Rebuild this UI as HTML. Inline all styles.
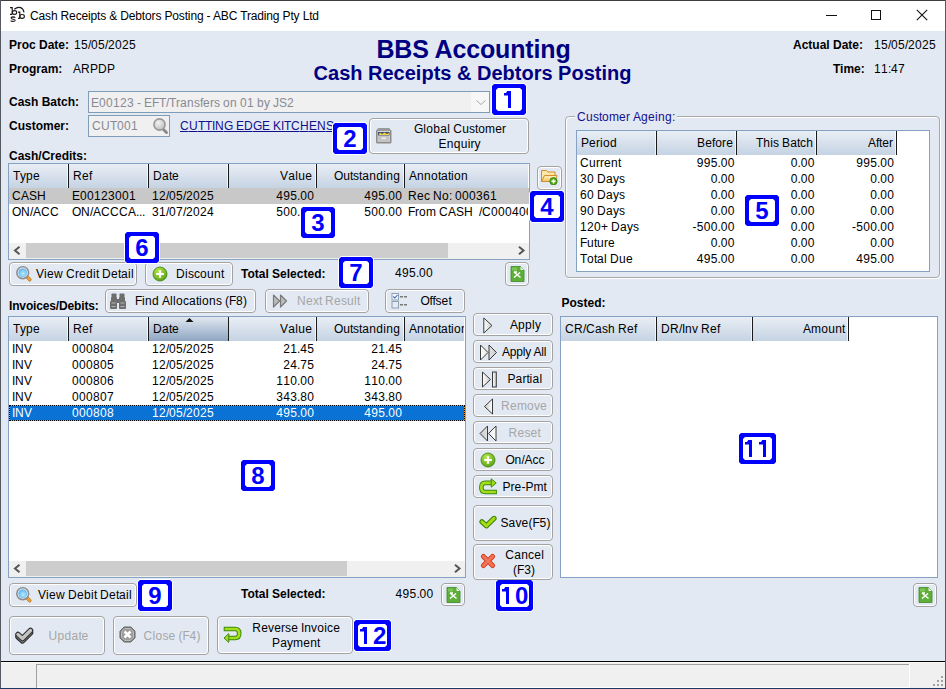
<!DOCTYPE html><html><head><meta charset="utf-8"><style>
html,body{margin:0;padding:0;}
body{width:946px;height:689px;position:relative;overflow:hidden;background:#e3e9f3;font-family:"Liberation Sans", sans-serif;}
.a{position:absolute;}
.t{position:absolute;white-space:nowrap;font-family:"Liberation Sans", sans-serif;}
.c{display:inline-block;}
</style></head><body>
<div class="a" style="left:0px;top:0px;width:946px;height:31px;background:#fff;"></div>
<div class="a" style="left:0px;top:661px;width:946px;height:28px;background:#f0f0f0;"></div>
<div class="a" style="left:0px;top:661px;width:946px;height:1px;background:#000;"></div>
<div class="a" style="left:36px;top:664px;width:874px;height:1px;background:#a0a0a0;"></div>
<div class="a" style="left:36px;top:664px;width:1px;height:24px;background:#a0a0a0;"></div>
<div class="a" style="left:0px;top:662px;width:946px;height:1px;background:#fbfbfb;"></div>
<div class="a" style="left:909px;top:664px;width:1px;height:24px;background:#fff;"></div>
<div class="a" style="left:37px;top:687px;width:873px;height:1px;background:#fff;"></div>
<div class="a" style="left:941px;top:676px;width:2px;height:2px;background:#a0a0a0;"></div>
<div class="a" style="left:937px;top:680px;width:2px;height:2px;background:#a0a0a0;"></div>
<div class="a" style="left:941px;top:680px;width:2px;height:2px;background:#a0a0a0;"></div>
<div class="a" style="left:933px;top:684px;width:2px;height:2px;background:#a0a0a0;"></div>
<div class="a" style="left:937px;top:684px;width:2px;height:2px;background:#a0a0a0;"></div>
<div class="a" style="left:941px;top:684px;width:2px;height:2px;background:#a0a0a0;"></div>
<div class="a" style="left:0px;top:0px;width:946px;height:1px;background:#3c3c3c;"></div>
<div class="a" style="left:0px;top:0px;width:1px;height:689px;background:#555a60;"></div>
<div class="a" style="left:945px;top:0px;width:1px;height:689px;background:#555a60;"></div>
<div class="a" style="left:0px;top:688px;width:946px;height:1px;background:#1d3a5c;"></div>
<svg class="a" style="left:8px;top:5px" width="20" height="20" viewBox="0 0 20 20"><g fill="none" stroke="#1a1a1a" stroke-width="1.15"><path d="M2 2.6 H4.2 V9.3 M2 9.3 H4.2"/><ellipse cx="6.5" cy="7.5" rx="2.2" ry="1.9"/><path d="M7.2 12.6 Q6.8 11.9 5 11.9 Q3 12 3.2 13.1 Q3.5 14 5.2 14.2 Q7.3 14.5 7.2 15.4 Q7 16.4 5 16.4 Q3.2 16.3 2.7 15.6"/><path d="M10 7.1 H11.8 V13.4 M10 13.4 H11.8"/><ellipse cx="14.1" cy="11.4" rx="2.3" ry="1.9"/><path d="M6.3 4.2 Q9.5 1.6 12.6 2.6 Q15.5 3.6 16 7.4"/></g></svg>
<div class="t" style="top:10.00px;font-size:12px;line-height:12px;color:#000;left:30px;letter-spacing:-0.15px;">Cash Receipts &amp; Debtors Posting - ABC Trading Pty Ltd</div>
<div class="a" style="left:826px;top:15px;width:11px;height:1px;background:#111;"></div>
<div class="a" style="left:871px;top:10px;width:10px;height:10px;box-sizing:border-box;border:1px solid #111;"></div>
<svg class="a" style="left:916px;top:9px" width="12" height="12" viewBox="0 0 12 12"><path d="M0.8 0.8 L11.2 11.2 M11.2 0.8 L0.8 11.2" stroke="#111" stroke-width="1.1"/></svg>
<div class="t" style="top:39.00px;font-size:12px;line-height:12px;color:#000;font-weight:bold;left:9px;">Proc Date:</div>
<div class="t" style="top:39.00px;font-size:12px;line-height:12px;color:#000;left:74px;"><span class="c" style="width:7px">1</span><span class="c" style="width:7px">5</span><span class="c" style="width:3px">/</span><span class="c" style="width:7px">0</span><span class="c" style="width:7px">5</span><span class="c" style="width:3px">/</span><span class="c" style="width:7px">2</span><span class="c" style="width:7px">0</span><span class="c" style="width:7px">2</span><span class="c" style="width:7px">5</span></div>
<div class="t" style="top:63.00px;font-size:12px;line-height:12px;color:#000;font-weight:bold;left:9px;">Program:</div>
<div class="t" style="top:63.00px;font-size:12px;line-height:12px;color:#000;left:73px;"><span class="c" style="width:8px">A</span><span class="c" style="width:9px">R</span><span class="c" style="width:8px">P</span><span class="c" style="width:9px">D</span><span class="c" style="width:8px">P</span></div>
<div class="t" style="top:36.50px;font-size:25px;line-height:25px;color:#000080;font-weight:bold;left:273.5px;width:400px;text-align:center;letter-spacing:-0.15px;">BBS Accounting</div>
<div class="t" style="top:63.00px;font-size:20px;line-height:20px;color:#000080;font-weight:bold;left:272.5px;width:400px;text-align:center;">Cash Receipts &amp; Debtors Posting</div>
<div class="t" style="top:39.00px;font-size:12px;line-height:12px;color:#000;font-weight:bold;left:793px;">Actual Date:</div>
<div class="t" style="top:39.00px;font-size:12px;line-height:12px;color:#000;left:874px;"><span class="c" style="width:7px">1</span><span class="c" style="width:7px">5</span><span class="c" style="width:3px">/</span><span class="c" style="width:7px">0</span><span class="c" style="width:7px">5</span><span class="c" style="width:3px">/</span><span class="c" style="width:7px">2</span><span class="c" style="width:7px">0</span><span class="c" style="width:7px">2</span><span class="c" style="width:7px">5</span></div>
<div class="t" style="top:63.00px;font-size:12px;line-height:12px;color:#000;font-weight:bold;left:833px;">Time:</div>
<div class="t" style="top:63.00px;font-size:12px;line-height:12px;color:#000;left:874px;"><span class="c" style="width:7px">1</span><span class="c" style="width:7px">1</span><span class="c" style="width:3px">:</span><span class="c" style="width:7px">4</span><span class="c" style="width:7px">7</span></div>
<div class="t" style="top:96.00px;font-size:12px;line-height:12px;color:#000;font-weight:bold;left:9px;">Cash Batch:</div>
<div class="a" style="left:88px;top:91px;width:402px;height:22px;box-sizing:border-box;border:1px solid #7f9db9;background:#f0f0f0;"></div>
<div class="a" style="left:471px;top:92px;width:18px;height:20px;background:#f7f7f7;"></div>
<svg class="a" style="left:475px;top:99px" width="12" height="8" viewBox="0 0 12 8"><path d="M1.5 1.5 L6 5.5 L10.5 1.5" fill="none" stroke="#a8a8a8" stroke-width="1"/></svg>
<div class="t" style="top:97.00px;font-size:12px;line-height:12px;color:#898994;left:91px;"><span class="c" style="width:8px">E</span><span class="c" style="width:7px">0</span><span class="c" style="width:7px">0</span><span class="c" style="width:7px">1</span><span class="c" style="width:7px">2</span><span class="c" style="width:7px">3</span><span class="c" style="width:3px">&nbsp;</span><span class="c" style="width:4px">-</span><span class="c" style="width:3px">&nbsp;</span><span class="c" style="width:8px">E</span><span class="c" style="width:7px">F</span><span class="c" style="width:7px">T</span><span class="c" style="width:3px">/</span><span class="c" style="width:7px">T</span><span class="c" style="width:4px">r</span><span class="c" style="width:7px">a</span><span class="c" style="width:7px">n</span><span class="c" style="width:6px">s</span><span class="c" style="width:3px">f</span><span class="c" style="width:7px">e</span><span class="c" style="width:4px">r</span><span class="c" style="width:6px">s</span><span class="c" style="width:3px">&nbsp;</span><span class="c" style="width:7px">o</span><span class="c" style="width:7px">n</span><span class="c" style="width:3px">&nbsp;</span><span class="c" style="width:7px">0</span><span class="c" style="width:7px">1</span><span class="c" style="width:3px">&nbsp;</span><span class="c" style="width:7px">b</span><span class="c" style="width:6px">y</span><span class="c" style="width:3px">&nbsp;</span><span class="c" style="width:6px">J</span><span class="c" style="width:8px">S</span><span class="c" style="width:7px">2</span></div>
<div class="t" style="top:120.00px;font-size:12px;line-height:12px;color:#000;font-weight:bold;left:9px;">Customer:</div>
<div class="a" style="left:88px;top:115px;width:82px;height:22px;box-sizing:border-box;border:1px solid #7f9db9;background:#f0f0f0;"></div>
<div class="t" style="top:120.00px;font-size:12px;line-height:12px;color:#898994;left:92px;"><span class="c" style="width:9px">C</span><span class="c" style="width:9px">U</span><span class="c" style="width:7px">T</span><span class="c" style="width:7px">0</span><span class="c" style="width:7px">0</span><span class="c" style="width:7px">1</span></div>
<svg class="a" style="left:151px;top:117px" width="18" height="18" viewBox="0 0 18 18"><defs><radialGradient id="mg" cx="0.4" cy="0.35" r="0.7"><stop offset="0" stop-color="#f2f2f2"/><stop offset="1" stop-color="#bdbdbd"/></radialGradient></defs><path d="M12.5 12.5 L15.5 15.5" stroke="#8a8a8a" stroke-width="3" stroke-linecap="round"/><circle cx="8.5" cy="7.5" r="5.6" fill="url(#mg)" stroke="#9a9a9a" stroke-width="1.6"/></svg>
<div class="t" style="top:120.00px;font-size:12px;line-height:12px;color:#10108c;left:180px;"><span class="c" style="width:9px;text-decoration:underline">C</span><span class="c" style="width:9px;text-decoration:underline">U</span><span class="c" style="width:7px;text-decoration:underline">T</span><span class="c" style="width:7px;text-decoration:underline">T</span><span class="c" style="width:3px;text-decoration:underline">I</span><span class="c" style="width:9px;text-decoration:underline">N</span><span class="c" style="width:9px;text-decoration:underline">G</span><span class="c" style="width:3px;text-decoration:underline">&nbsp;</span><span class="c" style="width:8px;text-decoration:underline">E</span><span class="c" style="width:9px;text-decoration:underline">D</span><span class="c" style="width:9px;text-decoration:underline">G</span><span class="c" style="width:8px;text-decoration:underline">E</span><span class="c" style="width:3px;text-decoration:underline">&nbsp;</span><span class="c" style="width:8px;text-decoration:underline">K</span><span class="c" style="width:3px;text-decoration:underline">I</span><span class="c" style="width:7px;text-decoration:underline">T</span><span class="c" style="width:9px;text-decoration:underline">C</span><span class="c" style="width:9px;text-decoration:underline">H</span><span class="c" style="width:8px;text-decoration:underline">E</span><span class="c" style="width:9px;text-decoration:underline">N</span><span class="c" style="width:8px;text-decoration:underline">S</span></div>
<div class="a" style="left:369px;top:118px;width:160px;height:36px;box-sizing:border-box;border:1px solid #a3a3a3;border-radius:4px;background:#e3e9f3;box-shadow:inset 0 0 0 1px #fff;"></div>
<svg class="a" style="left:375px;top:127px" width="18" height="18" viewBox="0 0 18 18"><rect x="1" y="2.5" width="15.5" height="14" rx="1.5" fill="#8c8c8c"/><rect x="2.5" y="1" width="12.5" height="3" rx="1" fill="#9a9a9a"/><rect x="2.5" y="4" width="12.5" height="11" fill="#d6d6d6"/><rect x="3" y="5" width="11.5" height="3.5" fill="#3a4f7a"/><path d="M3.5 8 L5 5.5 L7 7 L9.5 5.5 L12 7 L14 6 L14 8 Z" fill="#f2d23c"/><rect x="3" y="9" width="11.5" height="6" fill="#c4c4c4"/><rect x="6.5" y="10.5" width="4.5" height="1.5" fill="#eee"/></svg>
<div class="t" style="top:123.00px;font-size:12px;line-height:12px;color:#000;left:260px;width:400px;text-align:center;"><span class="c" style="width:9px">G</span><span class="c" style="width:3px">l</span><span class="c" style="width:7px">o</span><span class="c" style="width:7px">b</span><span class="c" style="width:7px">a</span><span class="c" style="width:3px">l</span><span class="c" style="width:3px">&nbsp;</span><span class="c" style="width:9px">C</span><span class="c" style="width:7px">u</span><span class="c" style="width:6px">s</span><span class="c" style="width:3px">t</span><span class="c" style="width:7px">o</span><span class="c" style="width:10px">m</span><span class="c" style="width:7px">e</span><span class="c" style="width:4px">r</span></div>
<div class="t" style="top:138.00px;font-size:12px;line-height:12px;color:#000;left:259.5px;width:400px;text-align:center;"><span class="c" style="width:8px">E</span><span class="c" style="width:7px">n</span><span class="c" style="width:7px">q</span><span class="c" style="width:7px">u</span><span class="c" style="width:3px">i</span><span class="c" style="width:4px">r</span><span class="c" style="width:6px">y</span></div>
<div class="t" style="top:150.00px;font-size:12px;line-height:12px;color:#000;font-weight:bold;left:9px;">Cash/Credits:</div>
<div class="a" style="left:8px;top:163px;width:522px;height:97px;box-sizing:border-box;border:1px solid #86a2c2;background:#fff;"></div>
<div class="a" style="left:9px;top:164px;width:519px;height:24px;background:linear-gradient(#e9eef5,#c5d3e3);"></div>
<div class="a" style="left:67px;top:164px;width:1px;height:24px;background:rgba(255,255,255,0.7);"></div>
<div class="a" style="left:68px;top:164px;width:1px;height:24px;background:#1a1a1a;"></div>
<div class="a" style="left:147px;top:164px;width:1px;height:24px;background:rgba(255,255,255,0.7);"></div>
<div class="a" style="left:148px;top:164px;width:1px;height:24px;background:#1a1a1a;"></div>
<div class="a" style="left:227px;top:164px;width:1px;height:24px;background:rgba(255,255,255,0.7);"></div>
<div class="a" style="left:228px;top:164px;width:1px;height:24px;background:#1a1a1a;"></div>
<div class="a" style="left:315px;top:164px;width:1px;height:24px;background:rgba(255,255,255,0.7);"></div>
<div class="a" style="left:316px;top:164px;width:1px;height:24px;background:#1a1a1a;"></div>
<div class="a" style="left:403px;top:164px;width:1px;height:24px;background:rgba(255,255,255,0.7);"></div>
<div class="a" style="left:404px;top:164px;width:1px;height:24px;background:#1a1a1a;"></div>
<div class="t" style="top:170.00px;font-size:12px;line-height:12px;color:#000;left:13px;"><span class="c" style="width:7px">T</span><span class="c" style="width:6px">y</span><span class="c" style="width:7px">p</span><span class="c" style="width:7px">e</span></div>
<div class="t" style="top:170.00px;font-size:12px;line-height:12px;color:#000;left:73px;"><span class="c" style="width:9px">R</span><span class="c" style="width:7px">e</span><span class="c" style="width:3px">f</span></div>
<div class="t" style="top:170.00px;font-size:12px;line-height:12px;color:#000;left:153px;"><span class="c" style="width:9px">D</span><span class="c" style="width:7px">a</span><span class="c" style="width:3px">t</span><span class="c" style="width:7px">e</span></div>
<div class="t" style="top:170.00px;font-size:12px;line-height:12px;color:#000;right:634px;text-align:right;"><span class="c" style="width:8px">V</span><span class="c" style="width:7px">a</span><span class="c" style="width:3px">l</span><span class="c" style="width:7px">u</span><span class="c" style="width:7px">e</span></div>
<div class="t" style="top:170.00px;font-size:12px;line-height:12px;color:#000;right:546px;text-align:right;"><span class="c" style="width:9px">O</span><span class="c" style="width:7px">u</span><span class="c" style="width:3px">t</span><span class="c" style="width:6px">s</span><span class="c" style="width:3px">t</span><span class="c" style="width:7px">a</span><span class="c" style="width:7px">n</span><span class="c" style="width:7px">d</span><span class="c" style="width:3px">i</span><span class="c" style="width:7px">n</span><span class="c" style="width:7px">g</span></div>
<div class="t" style="top:170.00px;font-size:12px;line-height:12px;color:#000;left:409px;"><span class="c" style="width:8px">A</span><span class="c" style="width:7px">n</span><span class="c" style="width:7px">n</span><span class="c" style="width:7px">o</span><span class="c" style="width:3px">t</span><span class="c" style="width:7px">a</span><span class="c" style="width:3px">t</span><span class="c" style="width:3px">i</span><span class="c" style="width:7px">o</span><span class="c" style="width:7px">n</span></div>
<div class="a" style="left:9px;top:188px;width:520px;height:16px;background:#c8c8c8;"></div>
<div class="t" style="top:190.00px;font-size:12px;line-height:12px;color:#000;left:12px;"><span class="c" style="width:9px">C</span><span class="c" style="width:8px">A</span><span class="c" style="width:8px">S</span><span class="c" style="width:9px">H</span></div>
<div class="t" style="top:190.00px;font-size:12px;line-height:12px;color:#000;left:72px;"><span class="c" style="width:8px">E</span><span class="c" style="width:7px">0</span><span class="c" style="width:7px">0</span><span class="c" style="width:7px">1</span><span class="c" style="width:7px">2</span><span class="c" style="width:7px">3</span><span class="c" style="width:7px">0</span><span class="c" style="width:7px">0</span><span class="c" style="width:7px">1</span></div>
<div class="t" style="top:190.00px;font-size:12px;line-height:12px;color:#000;left:152px;"><span class="c" style="width:7px">1</span><span class="c" style="width:7px">2</span><span class="c" style="width:3px">/</span><span class="c" style="width:7px">0</span><span class="c" style="width:7px">5</span><span class="c" style="width:3px">/</span><span class="c" style="width:7px">2</span><span class="c" style="width:7px">0</span><span class="c" style="width:7px">2</span><span class="c" style="width:7px">5</span></div>
<div class="t" style="top:190.00px;font-size:12px;line-height:12px;color:#000;right:632px;text-align:right;"><span class="c" style="width:7px">4</span><span class="c" style="width:7px">9</span><span class="c" style="width:7px">5</span><span class="c" style="width:3px">.</span><span class="c" style="width:7px">0</span><span class="c" style="width:7px">0</span></div>
<div class="t" style="top:190.00px;font-size:12px;line-height:12px;color:#000;right:544px;text-align:right;"><span class="c" style="width:7px">4</span><span class="c" style="width:7px">9</span><span class="c" style="width:7px">5</span><span class="c" style="width:3px">.</span><span class="c" style="width:7px">0</span><span class="c" style="width:7px">0</span></div>
<div class="t" style="top:206.00px;font-size:12px;line-height:12px;color:#000;left:12px;"><span class="c" style="width:9px">O</span><span class="c" style="width:9px">N</span><span class="c" style="width:3px">/</span><span class="c" style="width:8px">A</span><span class="c" style="width:9px">C</span><span class="c" style="width:9px">C</span></div>
<div class="t" style="top:206.00px;font-size:12px;line-height:12px;color:#000;left:72px;"><span class="c" style="width:9px">O</span><span class="c" style="width:9px">N</span><span class="c" style="width:3px">/</span><span class="c" style="width:8px">A</span><span class="c" style="width:9px">C</span><span class="c" style="width:9px">C</span><span class="c" style="width:9px">C</span><span class="c" style="width:8px">A</span><span class="c" style="width:3px">.</span><span class="c" style="width:3px">.</span><span class="c" style="width:3px">.</span></div>
<div class="t" style="top:206.00px;font-size:12px;line-height:12px;color:#000;left:152px;"><span class="c" style="width:7px">3</span><span class="c" style="width:7px">1</span><span class="c" style="width:3px">/</span><span class="c" style="width:7px">0</span><span class="c" style="width:7px">7</span><span class="c" style="width:3px">/</span><span class="c" style="width:7px">2</span><span class="c" style="width:7px">0</span><span class="c" style="width:7px">2</span><span class="c" style="width:7px">4</span></div>
<div class="t" style="top:206.00px;font-size:12px;line-height:12px;color:#000;right:632px;text-align:right;"><span class="c" style="width:7px">5</span><span class="c" style="width:7px">0</span><span class="c" style="width:7px">0</span><span class="c" style="width:3px">.</span><span class="c" style="width:7px">0</span><span class="c" style="width:7px">0</span></div>
<div class="t" style="top:206.00px;font-size:12px;line-height:12px;color:#000;right:544px;text-align:right;"><span class="c" style="width:7px">5</span><span class="c" style="width:7px">0</span><span class="c" style="width:7px">0</span><span class="c" style="width:3px">.</span><span class="c" style="width:7px">0</span><span class="c" style="width:7px">0</span></div>
<div class="a" style="left:405px;top:188px;width:123px;height:32px;overflow:hidden;">
<div class="t" style="left:3px;top:2px;font-size:12px;line-height:12px;"><span class="c" style="width:9px">R</span><span class="c" style="width:7px">e</span><span class="c" style="width:6px">c</span><span class="c" style="width:3px">&nbsp;</span><span class="c" style="width:9px">N</span><span class="c" style="width:7px">o</span><span class="c" style="width:3px">:</span><span class="c" style="width:3px">&nbsp;</span><span class="c" style="width:7px">0</span><span class="c" style="width:7px">0</span><span class="c" style="width:7px">0</span><span class="c" style="width:7px">3</span><span class="c" style="width:7px">6</span><span class="c" style="width:7px">1</span></div>
<div class="t" style="left:3px;top:18px;font-size:12px;line-height:12px;"><span class="c" style="width:7px">F</span><span class="c" style="width:4px">r</span><span class="c" style="width:7px">o</span><span class="c" style="width:10px">m</span><span class="c" style="width:3px">&nbsp;</span><span class="c" style="width:9px">C</span><span class="c" style="width:8px">A</span><span class="c" style="width:8px">S</span><span class="c" style="width:9px">H</span><span class="c" style="width:3px">&nbsp;</span><span class="c" style="width:3px">&nbsp;</span><span class="c" style="width:3px">/</span><span class="c" style="width:9px">C</span><span class="c" style="width:7px">0</span><span class="c" style="width:7px">0</span><span class="c" style="width:7px">0</span><span class="c" style="width:7px">4</span><span class="c" style="width:7px">0</span><span class="c" style="width:7px">0</span></div>
</div>
<div class="a" style="left:9px;top:243px;width:520px;height:16px;background:#f0f0f0;"></div>
<div class="a" style="left:26px;top:243px;width:422px;height:15px;background:#cdcdcd;"></div>
<svg class="a" style="left:13px;top:246px" width="9" height="9" viewBox="0 0 9 9"><path d="M6.5 0.8 L2 4.5 L6.5 8.2" fill="none" stroke="#555" stroke-width="2"/></svg>
<svg class="a" style="left:517px;top:246px" width="9" height="9" viewBox="0 0 9 9"><path d="M2 0.8 L6.5 4.5 L2 8.2" fill="none" stroke="#555" stroke-width="2"/></svg>
<div class="a" style="left:537px;top:166px;width:25px;height:24px;box-sizing:border-box;border:1px solid #a3a3a3;border-radius:4px;background:#e3e9f3;box-shadow:inset 0 0 0 1px #fff;"></div>
<svg class="a" style="left:540px;top:167px" width="20" height="18" viewBox="0 0 20 18"><defs><linearGradient id="fg" x1="0" y1="0" x2="0" y2="1"><stop offset="0" stop-color="#fff2c0"/><stop offset="1" stop-color="#f0c560"/></linearGradient></defs><path d="M1.5 3.5 L6.5 3.5 L8 5 L15 5 L15 14.5 L1.5 14.5 Z" fill="#fbe6a8" stroke="#d28e2e" stroke-width="1"/><path d="M4.5 8.5 L17 8.5 L15 14.5 L1.5 14.5 Z" fill="url(#fg)" stroke="#d28e2e" stroke-width="1"/><circle cx="13.5" cy="14.3" r="3.7" fill="#4fa818" stroke="#2f7a0a" stroke-width="0.7"/><path d="M13.5 12.2 V16.4 M11.4 14.3 H15.6" stroke="#fff" stroke-width="1.4"/></svg>
<div class="a" style="left:9px;top:262px;width:128px;height:24px;box-sizing:border-box;border:1px solid #a3a3a3;border-radius:4px;background:#e3e9f3;box-shadow:inset 0 0 0 1px #fff;"></div>
<svg class="a" style="left:15px;top:265px" width="18" height="18" viewBox="0 0 18 18"><defs><radialGradient id="lg" cx="0.55" cy="0.6" r="0.7"><stop offset="0" stop-color="#b4ecfb"/><stop offset="1" stop-color="#4fa6ec"/></radialGradient></defs><path d="M11.2 13 L13.2 11 L16.2 14 Q16.4 16.2 14.2 16.2 Z" fill="#eba43a" stroke="#b8751a" stroke-width="0.8" stroke-linejoin="round"/><circle cx="7.7" cy="7.7" r="5.9" fill="#fff" stroke="#8c8c8c" stroke-width="1.6"/><circle cx="7.7" cy="7.7" r="4.5" fill="url(#lg)"/></svg>
<div class="t" style="top:268.00px;font-size:12px;line-height:12px;color:#000;left:36px;"><span class="c" style="width:8px">V</span><span class="c" style="width:3px">i</span><span class="c" style="width:7px">e</span><span class="c" style="width:9px">w</span><span class="c" style="width:3px">&nbsp;</span><span class="c" style="width:9px">C</span><span class="c" style="width:4px">r</span><span class="c" style="width:7px">e</span><span class="c" style="width:7px">d</span><span class="c" style="width:3px">i</span><span class="c" style="width:3px">t</span><span class="c" style="width:3px">&nbsp;</span><span class="c" style="width:9px">D</span><span class="c" style="width:7px">e</span><span class="c" style="width:3px">t</span><span class="c" style="width:7px">a</span><span class="c" style="width:3px">i</span><span class="c" style="width:3px">l</span></div>
<div class="a" style="left:145px;top:262px;width:88px;height:24px;box-sizing:border-box;border:1px solid #a3a3a3;border-radius:4px;background:#e3e9f3;box-shadow:inset 0 0 0 1px #fff;"></div>
<svg class="a" style="left:152px;top:266px" width="17" height="17" viewBox="0 0 17 17"><defs><radialGradient id="pg" cx="0.4" cy="0.3" r="0.8"><stop offset="0" stop-color="#b8e84a"/><stop offset="1" stop-color="#4f9c10"/></radialGradient></defs><circle cx="8" cy="8" r="7" fill="url(#pg)" stroke="#3e7d14" stroke-width="0.8"/><path d="M8 4.2 V11.8 M4.2 8 H11.8" stroke="#fff" stroke-width="2.2"/></svg>
<div class="t" style="top:268.00px;font-size:12px;line-height:12px;color:#000;left:176px;"><span class="c" style="width:9px">D</span><span class="c" style="width:3px">i</span><span class="c" style="width:6px">s</span><span class="c" style="width:6px">c</span><span class="c" style="width:7px">o</span><span class="c" style="width:7px">u</span><span class="c" style="width:7px">n</span><span class="c" style="width:3px">t</span></div>
<div class="t" style="top:268.00px;font-size:12px;line-height:12px;color:#000;font-weight:bold;left:241px;">Total Selected:</div>
<div class="t" style="top:267.00px;font-size:12px;line-height:12px;color:#000;left:395px;"><span class="c" style="width:7px">4</span><span class="c" style="width:7px">9</span><span class="c" style="width:7px">5</span><span class="c" style="width:3px">.</span><span class="c" style="width:7px">0</span><span class="c" style="width:7px">0</span></div>
<div class="a" style="left:505px;top:262px;width:24px;height:24px;box-sizing:border-box;border:1px solid #a3a3a3;border-radius:4px;background:#e3e9f3;box-shadow:inset 0 0 0 1px #fff;"></div>
<svg class="a" style="left:510px;top:266px" width="16" height="16" viewBox="0 0 16 16"><path d="M1 0.5 H10.5 L14 4 V15.5 H1 Z" fill="#5fae3a" stroke="#3e8a22" stroke-width="0.8"/><path d="M10.5 0.5 V4 H14" fill="#e8f4e0"/><rect x="2" y="1.5" width="5" height="3" fill="#7cc457"/><path d="M4 6 L10.5 11.5 M10 6.5 L4 11.5 M4 6 L7 6" stroke="#fff" stroke-width="1.4" fill="none"/></svg>
<div class="a" style="left:565px;top:116px;width:375px;height:162px;box-sizing:border-box;border:1px solid #a9a9a9;border-radius:4px;box-shadow:inset 1px 1px 0 #fff, 1px 1px 0 #fff;"></div>
<div class="a" style="left:575px;top:110px;width:102px;height:12px;background:#e3e9f3;"></div>
<div class="t" style="top:111.00px;font-size:12px;line-height:12px;color:#14108e;left:577px;"><span class="c" style="width:9px">C</span><span class="c" style="width:7px">u</span><span class="c" style="width:6px">s</span><span class="c" style="width:3px">t</span><span class="c" style="width:7px">o</span><span class="c" style="width:10px">m</span><span class="c" style="width:7px">e</span><span class="c" style="width:4px">r</span><span class="c" style="width:3px">&nbsp;</span><span class="c" style="width:8px">A</span><span class="c" style="width:7px">g</span><span class="c" style="width:7px">e</span><span class="c" style="width:3px">i</span><span class="c" style="width:7px">n</span><span class="c" style="width:7px">g</span><span class="c" style="width:3px">:</span></div>
<div class="a" style="left:576px;top:130px;width:354px;height:142px;box-sizing:border-box;border:1px solid #86a2c2;background:#fff;"></div>
<div class="a" style="left:577px;top:131px;width:319px;height:24px;background:linear-gradient(#e9eef5,#c5d3e3);"></div>
<div class="a" style="left:655px;top:131px;width:1px;height:24px;background:rgba(255,255,255,0.7);"></div>
<div class="a" style="left:656px;top:131px;width:1px;height:24px;background:#1a1a1a;"></div>
<div class="a" style="left:735px;top:131px;width:1px;height:24px;background:rgba(255,255,255,0.7);"></div>
<div class="a" style="left:736px;top:131px;width:1px;height:24px;background:#1a1a1a;"></div>
<div class="a" style="left:815px;top:131px;width:1px;height:24px;background:rgba(255,255,255,0.7);"></div>
<div class="a" style="left:816px;top:131px;width:1px;height:24px;background:#1a1a1a;"></div>
<div class="a" style="left:895px;top:131px;width:1px;height:24px;background:rgba(255,255,255,0.7);"></div>
<div class="a" style="left:896px;top:131px;width:1px;height:24px;background:#1a1a1a;"></div>
<div class="t" style="top:137.00px;font-size:12px;line-height:12px;color:#000;left:581px;"><span class="c" style="width:8px">P</span><span class="c" style="width:7px">e</span><span class="c" style="width:4px">r</span><span class="c" style="width:3px">i</span><span class="c" style="width:7px">o</span><span class="c" style="width:7px">d</span></div>
<div class="t" style="top:137.00px;font-size:12px;line-height:12px;color:#000;right:213px;text-align:right;"><span class="c" style="width:8px">B</span><span class="c" style="width:7px">e</span><span class="c" style="width:3px">f</span><span class="c" style="width:7px">o</span><span class="c" style="width:4px">r</span><span class="c" style="width:7px">e</span></div>
<div class="t" style="top:137.00px;font-size:12px;line-height:12px;color:#000;right:133px;text-align:right;"><span class="c" style="width:7px">T</span><span class="c" style="width:7px">h</span><span class="c" style="width:3px">i</span><span class="c" style="width:6px">s</span><span class="c" style="width:3px">&nbsp;</span><span class="c" style="width:8px">B</span><span class="c" style="width:7px">a</span><span class="c" style="width:3px">t</span><span class="c" style="width:6px">c</span><span class="c" style="width:7px">h</span></div>
<div class="t" style="top:137.00px;font-size:12px;line-height:12px;color:#000;right:53px;text-align:right;"><span class="c" style="width:8px">A</span><span class="c" style="width:3px">f</span><span class="c" style="width:3px">t</span><span class="c" style="width:7px">e</span><span class="c" style="width:4px">r</span></div>
<div class="t" style="top:157.00px;font-size:12px;line-height:12px;color:#000;left:580px;"><span class="c" style="width:9px">C</span><span class="c" style="width:7px">u</span><span class="c" style="width:4px">r</span><span class="c" style="width:4px">r</span><span class="c" style="width:7px">e</span><span class="c" style="width:7px">n</span><span class="c" style="width:3px">t</span></div>
<div class="t" style="top:157.00px;font-size:12px;line-height:12px;color:#000;right:211.5px;text-align:right;"><span class="c" style="width:7px">9</span><span class="c" style="width:7px">9</span><span class="c" style="width:7px">5</span><span class="c" style="width:3px">.</span><span class="c" style="width:7px">0</span><span class="c" style="width:7px">0</span></div>
<div class="t" style="top:157.00px;font-size:12px;line-height:12px;color:#000;right:131.5px;text-align:right;"><span class="c" style="width:7px">0</span><span class="c" style="width:3px">.</span><span class="c" style="width:7px">0</span><span class="c" style="width:7px">0</span></div>
<div class="t" style="top:157.00px;font-size:12px;line-height:12px;color:#000;right:52px;text-align:right;"><span class="c" style="width:7px">9</span><span class="c" style="width:7px">9</span><span class="c" style="width:7px">5</span><span class="c" style="width:3px">.</span><span class="c" style="width:7px">0</span><span class="c" style="width:7px">0</span></div>
<div class="t" style="top:173.00px;font-size:12px;line-height:12px;color:#000;left:580px;"><span class="c" style="width:7px">3</span><span class="c" style="width:7px">0</span><span class="c" style="width:3px">&nbsp;</span><span class="c" style="width:9px">D</span><span class="c" style="width:7px">a</span><span class="c" style="width:6px">y</span><span class="c" style="width:6px">s</span></div>
<div class="t" style="top:173.00px;font-size:12px;line-height:12px;color:#000;right:211.5px;text-align:right;"><span class="c" style="width:7px">0</span><span class="c" style="width:3px">.</span><span class="c" style="width:7px">0</span><span class="c" style="width:7px">0</span></div>
<div class="t" style="top:173.00px;font-size:12px;line-height:12px;color:#000;right:131.5px;text-align:right;"><span class="c" style="width:7px">0</span><span class="c" style="width:3px">.</span><span class="c" style="width:7px">0</span><span class="c" style="width:7px">0</span></div>
<div class="t" style="top:173.00px;font-size:12px;line-height:12px;color:#000;right:52px;text-align:right;"><span class="c" style="width:7px">0</span><span class="c" style="width:3px">.</span><span class="c" style="width:7px">0</span><span class="c" style="width:7px">0</span></div>
<div class="t" style="top:189.00px;font-size:12px;line-height:12px;color:#000;left:580px;"><span class="c" style="width:7px">6</span><span class="c" style="width:7px">0</span><span class="c" style="width:3px">&nbsp;</span><span class="c" style="width:9px">D</span><span class="c" style="width:7px">a</span><span class="c" style="width:6px">y</span><span class="c" style="width:6px">s</span></div>
<div class="t" style="top:189.00px;font-size:12px;line-height:12px;color:#000;right:211.5px;text-align:right;"><span class="c" style="width:7px">0</span><span class="c" style="width:3px">.</span><span class="c" style="width:7px">0</span><span class="c" style="width:7px">0</span></div>
<div class="t" style="top:189.00px;font-size:12px;line-height:12px;color:#000;right:131.5px;text-align:right;"><span class="c" style="width:7px">0</span><span class="c" style="width:3px">.</span><span class="c" style="width:7px">0</span><span class="c" style="width:7px">0</span></div>
<div class="t" style="top:189.00px;font-size:12px;line-height:12px;color:#000;right:52px;text-align:right;"><span class="c" style="width:7px">0</span><span class="c" style="width:3px">.</span><span class="c" style="width:7px">0</span><span class="c" style="width:7px">0</span></div>
<div class="t" style="top:205.00px;font-size:12px;line-height:12px;color:#000;left:580px;"><span class="c" style="width:7px">9</span><span class="c" style="width:7px">0</span><span class="c" style="width:3px">&nbsp;</span><span class="c" style="width:9px">D</span><span class="c" style="width:7px">a</span><span class="c" style="width:6px">y</span><span class="c" style="width:6px">s</span></div>
<div class="t" style="top:205.00px;font-size:12px;line-height:12px;color:#000;right:211.5px;text-align:right;"><span class="c" style="width:7px">0</span><span class="c" style="width:3px">.</span><span class="c" style="width:7px">0</span><span class="c" style="width:7px">0</span></div>
<div class="t" style="top:205.00px;font-size:12px;line-height:12px;color:#000;right:131.5px;text-align:right;"><span class="c" style="width:7px">0</span><span class="c" style="width:3px">.</span><span class="c" style="width:7px">0</span><span class="c" style="width:7px">0</span></div>
<div class="t" style="top:205.00px;font-size:12px;line-height:12px;color:#000;right:52px;text-align:right;"><span class="c" style="width:7px">0</span><span class="c" style="width:3px">.</span><span class="c" style="width:7px">0</span><span class="c" style="width:7px">0</span></div>
<div class="t" style="top:221.00px;font-size:12px;line-height:12px;color:#000;left:580px;"><span class="c" style="width:7px">1</span><span class="c" style="width:7px">2</span><span class="c" style="width:7px">0</span><span class="c" style="width:7px">+</span><span class="c" style="width:3px">&nbsp;</span><span class="c" style="width:9px">D</span><span class="c" style="width:7px">a</span><span class="c" style="width:6px">y</span><span class="c" style="width:6px">s</span></div>
<div class="t" style="top:221.00px;font-size:12px;line-height:12px;color:#000;right:211.5px;text-align:right;"><span class="c" style="width:4px">-</span><span class="c" style="width:7px">5</span><span class="c" style="width:7px">0</span><span class="c" style="width:7px">0</span><span class="c" style="width:3px">.</span><span class="c" style="width:7px">0</span><span class="c" style="width:7px">0</span></div>
<div class="t" style="top:221.00px;font-size:12px;line-height:12px;color:#000;right:131.5px;text-align:right;"><span class="c" style="width:7px">0</span><span class="c" style="width:3px">.</span><span class="c" style="width:7px">0</span><span class="c" style="width:7px">0</span></div>
<div class="t" style="top:221.00px;font-size:12px;line-height:12px;color:#000;right:52px;text-align:right;"><span class="c" style="width:4px">-</span><span class="c" style="width:7px">5</span><span class="c" style="width:7px">0</span><span class="c" style="width:7px">0</span><span class="c" style="width:3px">.</span><span class="c" style="width:7px">0</span><span class="c" style="width:7px">0</span></div>
<div class="t" style="top:237.00px;font-size:12px;line-height:12px;color:#000;left:580px;"><span class="c" style="width:7px">F</span><span class="c" style="width:7px">u</span><span class="c" style="width:3px">t</span><span class="c" style="width:7px">u</span><span class="c" style="width:4px">r</span><span class="c" style="width:7px">e</span></div>
<div class="t" style="top:237.00px;font-size:12px;line-height:12px;color:#000;right:211.5px;text-align:right;"><span class="c" style="width:7px">0</span><span class="c" style="width:3px">.</span><span class="c" style="width:7px">0</span><span class="c" style="width:7px">0</span></div>
<div class="t" style="top:237.00px;font-size:12px;line-height:12px;color:#000;right:131.5px;text-align:right;"><span class="c" style="width:7px">0</span><span class="c" style="width:3px">.</span><span class="c" style="width:7px">0</span><span class="c" style="width:7px">0</span></div>
<div class="t" style="top:237.00px;font-size:12px;line-height:12px;color:#000;right:52px;text-align:right;"><span class="c" style="width:7px">0</span><span class="c" style="width:3px">.</span><span class="c" style="width:7px">0</span><span class="c" style="width:7px">0</span></div>
<div class="t" style="top:253.00px;font-size:12px;line-height:12px;color:#000;left:580px;"><span class="c" style="width:7px">T</span><span class="c" style="width:7px">o</span><span class="c" style="width:3px">t</span><span class="c" style="width:7px">a</span><span class="c" style="width:3px">l</span><span class="c" style="width:3px">&nbsp;</span><span class="c" style="width:9px">D</span><span class="c" style="width:7px">u</span><span class="c" style="width:7px">e</span></div>
<div class="t" style="top:253.00px;font-size:12px;line-height:12px;color:#000;right:211.5px;text-align:right;"><span class="c" style="width:7px">4</span><span class="c" style="width:7px">9</span><span class="c" style="width:7px">5</span><span class="c" style="width:3px">.</span><span class="c" style="width:7px">0</span><span class="c" style="width:7px">0</span></div>
<div class="t" style="top:253.00px;font-size:12px;line-height:12px;color:#000;right:131.5px;text-align:right;"><span class="c" style="width:7px">0</span><span class="c" style="width:3px">.</span><span class="c" style="width:7px">0</span><span class="c" style="width:7px">0</span></div>
<div class="t" style="top:253.00px;font-size:12px;line-height:12px;color:#000;right:52px;text-align:right;"><span class="c" style="width:7px">4</span><span class="c" style="width:7px">9</span><span class="c" style="width:7px">5</span><span class="c" style="width:3px">.</span><span class="c" style="width:7px">0</span><span class="c" style="width:7px">0</span></div>
<div class="t" style="top:300.00px;font-size:12px;line-height:12px;color:#000;font-weight:bold;left:9px;letter-spacing:-0.15px;">Invoices/Debits:</div>
<div class="a" style="left:105px;top:289px;width:151px;height:24px;box-sizing:border-box;border:1px solid #a3a3a3;border-radius:4px;background:#e3e9f3;box-shadow:inset 0 0 0 1px #fff;"></div>
<svg class="a" style="left:110px;top:293px" width="16" height="16" viewBox="0 0 16 16"><g fill="#6e6e6e"><rect x="1.5" y="0.5" width="5" height="4" rx="0.8"/><rect x="9.5" y="0.5" width="5" height="4" rx="0.8"/><rect x="1" y="4" width="6" height="4.5" rx="0.8"/><rect x="9" y="4" width="6" height="4.5" rx="0.8"/><rect x="0" y="8" width="7" height="8" rx="1"/><rect x="9" y="8" width="7" height="8" rx="1"/><rect x="6.5" y="6" width="3" height="4"/></g><g fill="#b4b4b4"><rect x="1.5" y="9.5" width="4" height="1"/><rect x="10.5" y="9.5" width="4" height="1"/><rect x="1.5" y="13" width="4" height="1"/><rect x="10.5" y="13" width="4" height="1"/></g></svg>
<div class="t" style="top:295.00px;font-size:12px;line-height:12px;color:#000;left:135px;"><span class="c" style="width:7px">F</span><span class="c" style="width:3px">i</span><span class="c" style="width:7px">n</span><span class="c" style="width:7px">d</span><span class="c" style="width:3px">&nbsp;</span><span class="c" style="width:8px">A</span><span class="c" style="width:3px">l</span><span class="c" style="width:3px">l</span><span class="c" style="width:7px">o</span><span class="c" style="width:6px">c</span><span class="c" style="width:7px">a</span><span class="c" style="width:3px">t</span><span class="c" style="width:3px">i</span><span class="c" style="width:7px">o</span><span class="c" style="width:7px">n</span><span class="c" style="width:6px">s</span><span class="c" style="width:3px">&nbsp;</span><span class="c" style="width:4px">(</span><span class="c" style="width:7px">F</span><span class="c" style="width:7px">8</span><span class="c" style="width:4px">)</span></div>
<div class="a" style="left:265px;top:289px;width:104px;height:24px;box-sizing:border-box;border:1px solid #a3a3a3;border-radius:4px;background:#e3e9f3;box-shadow:inset 0 0 0 1px #fff;"></div>
<svg class="a" style="left:272px;top:294px" width="16" height="15" viewBox="0 0 16 15"><path d="M1.5 1 L7.5 7 L1.5 13 Z M8.5 1 L14.5 7 L8.5 13 Z" fill="#bcbcbc" stroke="#7a7a7a" stroke-width="1.2" stroke-linejoin="round"/></svg>
<div class="t" style="top:295.00px;font-size:12px;line-height:12px;color:#a6a6a6;left:297px;"><span class="c" style="width:9px">N</span><span class="c" style="width:7px">e</span><span class="c" style="width:6px">x</span><span class="c" style="width:3px">t</span><span class="c" style="width:3px">&nbsp;</span><span class="c" style="width:9px">R</span><span class="c" style="width:7px">e</span><span class="c" style="width:6px">s</span><span class="c" style="width:7px">u</span><span class="c" style="width:3px">l</span><span class="c" style="width:3px">t</span></div>
<div class="a" style="left:385px;top:289px;width:80px;height:24px;box-sizing:border-box;border:1px solid #a3a3a3;border-radius:4px;background:#e3e9f3;box-shadow:inset 0 0 0 1px #fff;"></div>
<svg class="a" style="left:391px;top:293px" width="18" height="16" viewBox="0 0 18 16"><rect x="1" y="0.5" width="6.5" height="6.5" fill="#f4f6f9" stroke="#8fa0b4"/><path d="M2.3 3.5 L3.8 5 L6.5 2" fill="none" stroke="#2a6fc0" stroke-width="1.1"/><rect x="1" y="8.5" width="6.5" height="6.5" fill="#e6ebf1" stroke="#8fa0b4"/><g fill="#7a7a7a"><rect x="9" y="3" width="3" height="1.5"/><rect x="13" y="3" width="3" height="1.5"/><rect x="9" y="11" width="3" height="1.5"/><rect x="13" y="11" width="3" height="1.5"/></g></svg>
<div class="t" style="top:295.00px;font-size:12px;line-height:12px;color:#000;left:420.5px;"><span class="c" style="width:9px">O</span><span class="c" style="width:3px">f</span><span class="c" style="width:3px">f</span><span class="c" style="width:6px">s</span><span class="c" style="width:7px">e</span><span class="c" style="width:3px">t</span></div>
<div class="a" style="left:8px;top:316px;width:458px;height:262px;box-sizing:border-box;border:1px solid #86a2c2;background:#fff;"></div>
<div class="a" style="left:9px;top:317px;width:455px;height:24px;background:linear-gradient(#e9eef5,#c5d3e3);"></div>
<div class="a" style="left:67px;top:317px;width:1px;height:24px;background:rgba(255,255,255,0.7);"></div>
<div class="a" style="left:68px;top:317px;width:1px;height:24px;background:#1a1a1a;"></div>
<div class="a" style="left:147px;top:317px;width:1px;height:24px;background:rgba(255,255,255,0.7);"></div>
<div class="a" style="left:148px;top:317px;width:1px;height:24px;background:#1a1a1a;"></div>
<div class="a" style="left:227px;top:317px;width:1px;height:24px;background:rgba(255,255,255,0.7);"></div>
<div class="a" style="left:228px;top:317px;width:1px;height:24px;background:#1a1a1a;"></div>
<div class="a" style="left:315px;top:317px;width:1px;height:24px;background:rgba(255,255,255,0.7);"></div>
<div class="a" style="left:316px;top:317px;width:1px;height:24px;background:#1a1a1a;"></div>
<div class="a" style="left:403px;top:317px;width:1px;height:24px;background:rgba(255,255,255,0.7);"></div>
<div class="a" style="left:404px;top:317px;width:1px;height:24px;background:#1a1a1a;"></div>
<div class="a" style="left:149px;top:317px;width:79px;height:24px;background:linear-gradient(#e2e8f0,#8ea5c3);"></div>
<svg class="a" style="left:185px;top:317px" width="9" height="6" viewBox="0 0 9 6"><path d="M0.5 5 L4.5 1 L8.5 5 Z" fill="#111"/></svg>
<div class="t" style="top:323.00px;font-size:12px;line-height:12px;color:#000;left:13px;"><span class="c" style="width:7px">T</span><span class="c" style="width:6px">y</span><span class="c" style="width:7px">p</span><span class="c" style="width:7px">e</span></div>
<div class="t" style="top:323.00px;font-size:12px;line-height:12px;color:#000;left:73px;"><span class="c" style="width:9px">R</span><span class="c" style="width:7px">e</span><span class="c" style="width:3px">f</span></div>
<div class="t" style="top:323.00px;font-size:12px;line-height:12px;color:#000;left:153px;"><span class="c" style="width:9px">D</span><span class="c" style="width:7px">a</span><span class="c" style="width:3px">t</span><span class="c" style="width:7px">e</span></div>
<div class="t" style="top:323.00px;font-size:12px;line-height:12px;color:#000;right:634px;text-align:right;"><span class="c" style="width:8px">V</span><span class="c" style="width:7px">a</span><span class="c" style="width:3px">l</span><span class="c" style="width:7px">u</span><span class="c" style="width:7px">e</span></div>
<div class="t" style="top:323.00px;font-size:12px;line-height:12px;color:#000;right:546px;text-align:right;"><span class="c" style="width:9px">O</span><span class="c" style="width:7px">u</span><span class="c" style="width:3px">t</span><span class="c" style="width:6px">s</span><span class="c" style="width:3px">t</span><span class="c" style="width:7px">a</span><span class="c" style="width:7px">n</span><span class="c" style="width:7px">d</span><span class="c" style="width:3px">i</span><span class="c" style="width:7px">n</span><span class="c" style="width:7px">g</span></div>
<div class="a" style="left:405px;top:317px;width:59px;height:24px;overflow:hidden;">
<div class="t" style="left:4px;top:6px;font-size:12px;line-height:12px;"><span class="c" style="width:8px">A</span><span class="c" style="width:7px">n</span><span class="c" style="width:7px">n</span><span class="c" style="width:7px">o</span><span class="c" style="width:3px">t</span><span class="c" style="width:7px">a</span><span class="c" style="width:3px">t</span><span class="c" style="width:3px">i</span><span class="c" style="width:7px">o</span><span class="c" style="width:7px">n</span></div>
</div>
<div class="a" style="left:9px;top:405px;width:456px;height:16px;background:#0a72d4;box-sizing:border-box;border:1px solid #f39a2a;"></div>
<div class="a" style="left:9px;top:405px;width:456px;height:16px;box-sizing:border-box;border:1px dotted #000;"></div>
<div class="t" style="top:343.00px;font-size:12px;line-height:12px;color:#000;left:12px;"><span class="c" style="width:3px">I</span><span class="c" style="width:9px">N</span><span class="c" style="width:8px">V</span></div>
<div class="t" style="top:343.00px;font-size:12px;line-height:12px;color:#000;left:72px;"><span class="c" style="width:7px">0</span><span class="c" style="width:7px">0</span><span class="c" style="width:7px">0</span><span class="c" style="width:7px">8</span><span class="c" style="width:7px">0</span><span class="c" style="width:7px">4</span></div>
<div class="t" style="top:343.00px;font-size:12px;line-height:12px;color:#000;left:152px;"><span class="c" style="width:7px">1</span><span class="c" style="width:7px">2</span><span class="c" style="width:3px">/</span><span class="c" style="width:7px">0</span><span class="c" style="width:7px">5</span><span class="c" style="width:3px">/</span><span class="c" style="width:7px">2</span><span class="c" style="width:7px">0</span><span class="c" style="width:7px">2</span><span class="c" style="width:7px">5</span></div>
<div class="t" style="top:343.00px;font-size:12px;line-height:12px;color:#000;right:632px;text-align:right;"><span class="c" style="width:7px">2</span><span class="c" style="width:7px">1</span><span class="c" style="width:3px">.</span><span class="c" style="width:7px">4</span><span class="c" style="width:7px">5</span></div>
<div class="t" style="top:343.00px;font-size:12px;line-height:12px;color:#000;right:544px;text-align:right;"><span class="c" style="width:7px">2</span><span class="c" style="width:7px">1</span><span class="c" style="width:3px">.</span><span class="c" style="width:7px">4</span><span class="c" style="width:7px">5</span></div>
<div class="t" style="top:359.00px;font-size:12px;line-height:12px;color:#000;left:12px;"><span class="c" style="width:3px">I</span><span class="c" style="width:9px">N</span><span class="c" style="width:8px">V</span></div>
<div class="t" style="top:359.00px;font-size:12px;line-height:12px;color:#000;left:72px;"><span class="c" style="width:7px">0</span><span class="c" style="width:7px">0</span><span class="c" style="width:7px">0</span><span class="c" style="width:7px">8</span><span class="c" style="width:7px">0</span><span class="c" style="width:7px">5</span></div>
<div class="t" style="top:359.00px;font-size:12px;line-height:12px;color:#000;left:152px;"><span class="c" style="width:7px">1</span><span class="c" style="width:7px">2</span><span class="c" style="width:3px">/</span><span class="c" style="width:7px">0</span><span class="c" style="width:7px">5</span><span class="c" style="width:3px">/</span><span class="c" style="width:7px">2</span><span class="c" style="width:7px">0</span><span class="c" style="width:7px">2</span><span class="c" style="width:7px">5</span></div>
<div class="t" style="top:359.00px;font-size:12px;line-height:12px;color:#000;right:632px;text-align:right;"><span class="c" style="width:7px">2</span><span class="c" style="width:7px">4</span><span class="c" style="width:3px">.</span><span class="c" style="width:7px">7</span><span class="c" style="width:7px">5</span></div>
<div class="t" style="top:359.00px;font-size:12px;line-height:12px;color:#000;right:544px;text-align:right;"><span class="c" style="width:7px">2</span><span class="c" style="width:7px">4</span><span class="c" style="width:3px">.</span><span class="c" style="width:7px">7</span><span class="c" style="width:7px">5</span></div>
<div class="t" style="top:375.00px;font-size:12px;line-height:12px;color:#000;left:12px;"><span class="c" style="width:3px">I</span><span class="c" style="width:9px">N</span><span class="c" style="width:8px">V</span></div>
<div class="t" style="top:375.00px;font-size:12px;line-height:12px;color:#000;left:72px;"><span class="c" style="width:7px">0</span><span class="c" style="width:7px">0</span><span class="c" style="width:7px">0</span><span class="c" style="width:7px">8</span><span class="c" style="width:7px">0</span><span class="c" style="width:7px">6</span></div>
<div class="t" style="top:375.00px;font-size:12px;line-height:12px;color:#000;left:152px;"><span class="c" style="width:7px">1</span><span class="c" style="width:7px">2</span><span class="c" style="width:3px">/</span><span class="c" style="width:7px">0</span><span class="c" style="width:7px">5</span><span class="c" style="width:3px">/</span><span class="c" style="width:7px">2</span><span class="c" style="width:7px">0</span><span class="c" style="width:7px">2</span><span class="c" style="width:7px">5</span></div>
<div class="t" style="top:375.00px;font-size:12px;line-height:12px;color:#000;right:632px;text-align:right;"><span class="c" style="width:7px">1</span><span class="c" style="width:7px">1</span><span class="c" style="width:7px">0</span><span class="c" style="width:3px">.</span><span class="c" style="width:7px">0</span><span class="c" style="width:7px">0</span></div>
<div class="t" style="top:375.00px;font-size:12px;line-height:12px;color:#000;right:544px;text-align:right;"><span class="c" style="width:7px">1</span><span class="c" style="width:7px">1</span><span class="c" style="width:7px">0</span><span class="c" style="width:3px">.</span><span class="c" style="width:7px">0</span><span class="c" style="width:7px">0</span></div>
<div class="t" style="top:391.00px;font-size:12px;line-height:12px;color:#000;left:12px;"><span class="c" style="width:3px">I</span><span class="c" style="width:9px">N</span><span class="c" style="width:8px">V</span></div>
<div class="t" style="top:391.00px;font-size:12px;line-height:12px;color:#000;left:72px;"><span class="c" style="width:7px">0</span><span class="c" style="width:7px">0</span><span class="c" style="width:7px">0</span><span class="c" style="width:7px">8</span><span class="c" style="width:7px">0</span><span class="c" style="width:7px">7</span></div>
<div class="t" style="top:391.00px;font-size:12px;line-height:12px;color:#000;left:152px;"><span class="c" style="width:7px">1</span><span class="c" style="width:7px">2</span><span class="c" style="width:3px">/</span><span class="c" style="width:7px">0</span><span class="c" style="width:7px">5</span><span class="c" style="width:3px">/</span><span class="c" style="width:7px">2</span><span class="c" style="width:7px">0</span><span class="c" style="width:7px">2</span><span class="c" style="width:7px">5</span></div>
<div class="t" style="top:391.00px;font-size:12px;line-height:12px;color:#000;right:632px;text-align:right;"><span class="c" style="width:7px">3</span><span class="c" style="width:7px">4</span><span class="c" style="width:7px">3</span><span class="c" style="width:3px">.</span><span class="c" style="width:7px">8</span><span class="c" style="width:7px">0</span></div>
<div class="t" style="top:391.00px;font-size:12px;line-height:12px;color:#000;right:544px;text-align:right;"><span class="c" style="width:7px">3</span><span class="c" style="width:7px">4</span><span class="c" style="width:7px">3</span><span class="c" style="width:3px">.</span><span class="c" style="width:7px">8</span><span class="c" style="width:7px">0</span></div>
<div class="t" style="top:407.00px;font-size:12px;line-height:12px;color:#fff;left:12px;"><span class="c" style="width:3px">I</span><span class="c" style="width:9px">N</span><span class="c" style="width:8px">V</span></div>
<div class="t" style="top:407.00px;font-size:12px;line-height:12px;color:#fff;left:72px;"><span class="c" style="width:7px">0</span><span class="c" style="width:7px">0</span><span class="c" style="width:7px">0</span><span class="c" style="width:7px">8</span><span class="c" style="width:7px">0</span><span class="c" style="width:7px">8</span></div>
<div class="t" style="top:407.00px;font-size:12px;line-height:12px;color:#fff;left:152px;"><span class="c" style="width:7px">1</span><span class="c" style="width:7px">2</span><span class="c" style="width:3px">/</span><span class="c" style="width:7px">0</span><span class="c" style="width:7px">5</span><span class="c" style="width:3px">/</span><span class="c" style="width:7px">2</span><span class="c" style="width:7px">0</span><span class="c" style="width:7px">2</span><span class="c" style="width:7px">5</span></div>
<div class="t" style="top:407.00px;font-size:12px;line-height:12px;color:#fff;right:632px;text-align:right;"><span class="c" style="width:7px">4</span><span class="c" style="width:7px">9</span><span class="c" style="width:7px">5</span><span class="c" style="width:3px">.</span><span class="c" style="width:7px">0</span><span class="c" style="width:7px">0</span></div>
<div class="t" style="top:407.00px;font-size:12px;line-height:12px;color:#fff;right:544px;text-align:right;"><span class="c" style="width:7px">4</span><span class="c" style="width:7px">9</span><span class="c" style="width:7px">5</span><span class="c" style="width:3px">.</span><span class="c" style="width:7px">0</span><span class="c" style="width:7px">0</span></div>
<div class="a" style="left:9px;top:561px;width:456px;height:16px;background:#f0f0f0;"></div>
<div class="a" style="left:26px;top:561px;width:321px;height:15px;background:#cdcdcd;"></div>
<svg class="a" style="left:13px;top:564px" width="9" height="9" viewBox="0 0 9 9"><path d="M6.5 0.8 L2 4.5 L6.5 8.2" fill="none" stroke="#555" stroke-width="2"/></svg>
<svg class="a" style="left:453px;top:564px" width="9" height="9" viewBox="0 0 9 9"><path d="M2 0.8 L6.5 4.5 L2 8.2" fill="none" stroke="#555" stroke-width="2"/></svg>
<svg class="a" style="left:0px;top:0px" width="1" height="1" viewBox="0 0 1 1"><defs><linearGradient id="tg" x1="0" y1="0" x2="1" y2="0"><stop offset="0" stop-color="#ffffff"/><stop offset="1" stop-color="#c9c9c9"/></linearGradient><linearGradient id="tg2" x1="1" y1="0" x2="0" y2="0"><stop offset="0" stop-color="#ffffff"/><stop offset="1" stop-color="#c9c9c9"/></linearGradient></defs></svg>
<div class="a" style="left:473px;top:313px;width:80px;height:23px;box-sizing:border-box;border:1px solid #a3a3a3;border-radius:4px;background:#e3e9f3;box-shadow:inset 0 0 0 1px #fff;"></div>
<svg class="a" style="left:482px;top:316px" width="12" height="19" viewBox="0 0 12 19"><path d="M1.8 2 L10 9.5 L1.8 17 Z" fill="url(#tg)" stroke="#3a3a3a" stroke-width="1" stroke-linejoin="miter"/></svg>
<div class="t" style="top:319.00px;font-size:12px;line-height:12px;color:#000;left:510px;"><span class="c" style="width:8px">A</span><span class="c" style="width:7px">p</span><span class="c" style="width:7px">p</span><span class="c" style="width:3px">l</span><span class="c" style="width:6px">y</span></div>
<div class="a" style="left:473px;top:340px;width:80px;height:23px;box-sizing:border-box;border:1px solid #a3a3a3;border-radius:4px;background:#e3e9f3;box-shadow:inset 0 0 0 1px #fff;"></div>
<svg class="a" style="left:479px;top:343px" width="20" height="19" viewBox="0 0 20 19"><path d="M1.5 2 L9 9.5 L1.5 17 Z M10 2 L17.5 9.5 L10 17 Z" fill="url(#tg)" stroke="#3a3a3a" stroke-width="1" stroke-linejoin="miter"/></svg>
<div class="t" style="top:346.00px;font-size:12px;line-height:12px;color:#000;left:502px;letter-spacing:-0.2px;">Apply All</div>
<div class="a" style="left:473px;top:367px;width:80px;height:23px;box-sizing:border-box;border:1px solid #a3a3a3;border-radius:4px;background:#e3e9f3;box-shadow:inset 0 0 0 1px #fff;"></div>
<svg class="a" style="left:481px;top:370px" width="18" height="19" viewBox="0 0 18 19"><path d="M1.5 2 L9.5 9.5 L1.5 17 Z" fill="url(#tg)" stroke="#3a3a3a" stroke-width="1" stroke-linejoin="miter"/><rect x="11.5" y="2" width="3.8" height="15" fill="url(#tg)" stroke="#3a3a3a" stroke-width="1" stroke-linejoin="miter"/></svg>
<div class="t" style="top:373.00px;font-size:12px;line-height:12px;color:#000;left:507.5px;"><span class="c" style="width:8px">P</span><span class="c" style="width:7px">a</span><span class="c" style="width:4px">r</span><span class="c" style="width:3px">t</span><span class="c" style="width:3px">i</span><span class="c" style="width:7px">a</span><span class="c" style="width:3px">l</span></div>
<div class="a" style="left:473px;top:394px;width:80px;height:23px;box-sizing:border-box;border:1px solid #a3a3a3;border-radius:4px;background:#e3e9f3;box-shadow:inset 0 0 0 1px #fff;"></div>
<svg class="a" style="left:483px;top:397px" width="12" height="19" viewBox="0 0 12 19"><path d="M9.5 2 L1.5 9.5 L9.5 17 Z" fill="url(#tg2)" stroke="#3a3a3a" stroke-width="1"/></svg>
<div class="t" style="top:400.00px;font-size:12px;line-height:12px;color:#a6a6a6;left:501px;"><span class="c" style="width:9px">R</span><span class="c" style="width:7px">e</span><span class="c" style="width:10px">m</span><span class="c" style="width:7px">o</span><span class="c" style="width:6px">v</span><span class="c" style="width:7px">e</span></div>
<div class="a" style="left:473px;top:421px;width:80px;height:23px;box-sizing:border-box;border:1px solid #a3a3a3;border-radius:4px;background:#e3e9f3;box-shadow:inset 0 0 0 1px #fff;"></div>
<svg class="a" style="left:479px;top:424px" width="20" height="19" viewBox="0 0 20 19"><path d="M8.5 2 L1 9.5 L8.5 17 Z M17 2 L9.5 9.5 L17 17 Z" fill="url(#tg2)" stroke="#3a3a3a" stroke-width="1"/></svg>
<div class="t" style="top:427.00px;font-size:12px;line-height:12px;color:#a6a6a6;left:508.5px;"><span class="c" style="width:9px">R</span><span class="c" style="width:7px">e</span><span class="c" style="width:6px">s</span><span class="c" style="width:7px">e</span><span class="c" style="width:3px">t</span></div>
<div class="a" style="left:473px;top:448px;width:80px;height:23px;box-sizing:border-box;border:1px solid #a3a3a3;border-radius:4px;background:#e3e9f3;box-shadow:inset 0 0 0 1px #fff;"></div>
<svg class="a" style="left:480px;top:452px" width="17" height="17" viewBox="0 0 17 17"><defs><radialGradient id="pg" cx="0.4" cy="0.3" r="0.8"><stop offset="0" stop-color="#b8e84a"/><stop offset="1" stop-color="#4f9c10"/></radialGradient></defs><circle cx="8" cy="8" r="7" fill="url(#pg)" stroke="#3e7d14" stroke-width="0.8"/><path d="M8 4.2 V11.8 M4.2 8 H11.8" stroke="#fff" stroke-width="2.2"/></svg>
<div class="t" style="top:454.00px;font-size:12px;line-height:12px;color:#000;left:505.5px;"><span class="c" style="width:9px">O</span><span class="c" style="width:7px">n</span><span class="c" style="width:3px">/</span><span class="c" style="width:8px">A</span><span class="c" style="width:6px">c</span><span class="c" style="width:6px">c</span></div>
<div class="a" style="left:473px;top:475px;width:80px;height:23px;box-sizing:border-box;border:1px solid #a3a3a3;border-radius:4px;background:#e3e9f3;box-shadow:inset 0 0 0 1px #fff;"></div>
<svg class="a" style="left:478px;top:477px" width="20" height="20" viewBox="0 0 20 20"><path d="M13 5.9 H7.2 Q3.3 5.9 3.3 10.5 Q3.3 15 7.2 15 H16.6" fill="none" stroke="#3c8a0e" stroke-width="4.6" stroke-linecap="square"/><path d="M13 5.9 H7.2 Q3.3 5.9 3.3 10.5 Q3.3 15 7.2 15 H16.6" fill="none" stroke="#a6dc1e" stroke-width="2.6" stroke-linecap="square"/><path d="M13.2 1.8 L18.2 6 L13.2 10.2 Z" fill="#a6dc1e" stroke="#3c8a0e" stroke-width="1" stroke-linejoin="round"/></svg>
<div class="t" style="top:481.00px;font-size:12px;line-height:12px;color:#000;left:502.5px;"><span class="c" style="width:8px">P</span><span class="c" style="width:4px">r</span><span class="c" style="width:7px">e</span><span class="c" style="width:4px">-</span><span class="c" style="width:8px">P</span><span class="c" style="width:10px">m</span><span class="c" style="width:3px">t</span></div>
<div class="a" style="left:473px;top:505px;width:80px;height:36px;box-sizing:border-box;border:1px solid #a3a3a3;border-radius:4px;background:#e3e9f3;box-shadow:inset 0 0 0 1px #fff;"></div>
<svg class="a" style="left:477px;top:512px" width="20" height="20" viewBox="0 0 20 20"><g fill="none" stroke-linecap="round" stroke-linejoin="round"><path d="M5 9.8 L9.4 13.8 L17 6.4" stroke="#3a8008" stroke-width="5.2"/><path d="M5 9.8 L9.4 13.8 L17 6.4" stroke="#a4dc12" stroke-width="3.1"/></g></svg>
<div class="t" style="top:517.00px;font-size:12px;line-height:12px;color:#000;left:500.5px;"><span class="c" style="width:8px">S</span><span class="c" style="width:7px">a</span><span class="c" style="width:6px">v</span><span class="c" style="width:7px">e</span><span class="c" style="width:4px">(</span><span class="c" style="width:7px">F</span><span class="c" style="width:7px">5</span><span class="c" style="width:4px">)</span></div>
<div class="a" style="left:473px;top:544px;width:80px;height:36px;box-sizing:border-box;border:1px solid #a3a3a3;border-radius:4px;background:#e3e9f3;box-shadow:inset 0 0 0 1px #fff;"></div>
<svg class="a" style="left:479px;top:552px" width="18" height="18" viewBox="0 0 18 18"><g fill="none" stroke-linecap="round"><path d="M4.4 4.4 L13.6 13.6 M13.6 4.4 L4.4 13.6" stroke="#d23c1c" stroke-width="5"/><path d="M4.4 4.4 L13.6 13.6 M13.6 4.4 L4.4 13.6" stroke="#f27258" stroke-width="3"/></g></svg>
<div class="t" style="top:549.00px;font-size:12px;line-height:12px;color:#000;left:324.5px;width:400px;text-align:center;"><span class="c" style="width:9px">C</span><span class="c" style="width:7px">a</span><span class="c" style="width:7px">n</span><span class="c" style="width:6px">c</span><span class="c" style="width:7px">e</span><span class="c" style="width:3px">l</span></div>
<div class="t" style="top:564.00px;font-size:12px;line-height:12px;color:#000;left:324px;width:400px;text-align:center;"><span class="c" style="width:4px">(</span><span class="c" style="width:7px">F</span><span class="c" style="width:7px">3</span><span class="c" style="width:4px">)</span></div>
<div class="t" style="top:297.00px;font-size:12px;line-height:12px;color:#000;font-weight:bold;left:561.5px;">Posted:</div>
<div class="a" style="left:560px;top:316px;width:378px;height:262px;box-sizing:border-box;border:1px solid #86a2c2;background:#fff;"></div>
<div class="a" style="left:561px;top:317px;width:287px;height:24px;background:linear-gradient(#e9eef5,#c5d3e3);"></div>
<div class="a" style="left:655px;top:317px;width:1px;height:24px;background:rgba(255,255,255,0.7);"></div>
<div class="a" style="left:656px;top:317px;width:1px;height:24px;background:#1a1a1a;"></div>
<div class="a" style="left:751px;top:317px;width:1px;height:24px;background:rgba(255,255,255,0.7);"></div>
<div class="a" style="left:752px;top:317px;width:1px;height:24px;background:#1a1a1a;"></div>
<div class="a" style="left:847px;top:317px;width:1px;height:24px;background:rgba(255,255,255,0.7);"></div>
<div class="a" style="left:848px;top:317px;width:1px;height:24px;background:#1a1a1a;"></div>
<div class="t" style="top:323.00px;font-size:12px;line-height:12px;color:#000;left:565px;"><span class="c" style="width:9px">C</span><span class="c" style="width:9px">R</span><span class="c" style="width:3px">/</span><span class="c" style="width:9px">C</span><span class="c" style="width:7px">a</span><span class="c" style="width:6px">s</span><span class="c" style="width:7px">h</span><span class="c" style="width:3px">&nbsp;</span><span class="c" style="width:9px">R</span><span class="c" style="width:7px">e</span><span class="c" style="width:3px">f</span></div>
<div class="t" style="top:323.00px;font-size:12px;line-height:12px;color:#000;left:661px;"><span class="c" style="width:9px">D</span><span class="c" style="width:9px">R</span><span class="c" style="width:3px">/</span><span class="c" style="width:3px">I</span><span class="c" style="width:7px">n</span><span class="c" style="width:6px">v</span><span class="c" style="width:3px">&nbsp;</span><span class="c" style="width:9px">R</span><span class="c" style="width:7px">e</span><span class="c" style="width:3px">f</span></div>
<div class="t" style="top:323.00px;font-size:12px;line-height:12px;color:#000;right:101px;text-align:right;"><span class="c" style="width:8px">A</span><span class="c" style="width:10px">m</span><span class="c" style="width:7px">o</span><span class="c" style="width:7px">u</span><span class="c" style="width:7px">n</span><span class="c" style="width:3px">t</span></div>
<div class="a" style="left:913px;top:583px;width:24px;height:24px;box-sizing:border-box;border:1px solid #a3a3a3;border-radius:4px;background:#e3e9f3;box-shadow:inset 0 0 0 1px #fff;"></div>
<svg class="a" style="left:918px;top:587px" width="16" height="16" viewBox="0 0 16 16"><path d="M1 0.5 H10.5 L14 4 V15.5 H1 Z" fill="#5fae3a" stroke="#3e8a22" stroke-width="0.8"/><path d="M10.5 0.5 V4 H14" fill="#e8f4e0"/><rect x="2" y="1.5" width="5" height="3" fill="#7cc457"/><path d="M4 6 L10.5 11.5 M10 6.5 L4 11.5 M4 6 L7 6" stroke="#fff" stroke-width="1.4" fill="none"/></svg>
<div class="a" style="left:9px;top:583px;width:128px;height:24px;box-sizing:border-box;border:1px solid #a3a3a3;border-radius:4px;background:#e3e9f3;box-shadow:inset 0 0 0 1px #fff;"></div>
<svg class="a" style="left:15px;top:586px" width="18" height="18" viewBox="0 0 18 18"><defs><radialGradient id="lg" cx="0.55" cy="0.6" r="0.7"><stop offset="0" stop-color="#b4ecfb"/><stop offset="1" stop-color="#4fa6ec"/></radialGradient></defs><path d="M11.2 13 L13.2 11 L16.2 14 Q16.4 16.2 14.2 16.2 Z" fill="#eba43a" stroke="#b8751a" stroke-width="0.8" stroke-linejoin="round"/><circle cx="7.7" cy="7.7" r="5.9" fill="#fff" stroke="#8c8c8c" stroke-width="1.6"/><circle cx="7.7" cy="7.7" r="4.5" fill="url(#lg)"/></svg>
<div class="t" style="top:589.00px;font-size:12px;line-height:12px;color:#000;left:38px;"><span class="c" style="width:8px">V</span><span class="c" style="width:3px">i</span><span class="c" style="width:7px">e</span><span class="c" style="width:9px">w</span><span class="c" style="width:3px">&nbsp;</span><span class="c" style="width:9px">D</span><span class="c" style="width:7px">e</span><span class="c" style="width:7px">b</span><span class="c" style="width:3px">i</span><span class="c" style="width:3px">t</span><span class="c" style="width:3px">&nbsp;</span><span class="c" style="width:9px">D</span><span class="c" style="width:7px">e</span><span class="c" style="width:3px">t</span><span class="c" style="width:7px">a</span><span class="c" style="width:3px">i</span><span class="c" style="width:3px">l</span></div>
<div class="t" style="top:588.00px;font-size:12px;line-height:12px;color:#000;font-weight:bold;left:241px;">Total Selected:</div>
<div class="t" style="top:588.00px;font-size:12px;line-height:12px;color:#000;left:395.5px;"><span class="c" style="width:7px">4</span><span class="c" style="width:7px">9</span><span class="c" style="width:7px">5</span><span class="c" style="width:3px">.</span><span class="c" style="width:7px">0</span><span class="c" style="width:7px">0</span></div>
<div class="a" style="left:441px;top:583px;width:24px;height:23px;box-sizing:border-box;border:1px solid #a3a3a3;border-radius:4px;background:#e3e9f3;box-shadow:inset 0 0 0 1px #fff;"></div>
<svg class="a" style="left:446px;top:587px" width="16" height="16" viewBox="0 0 16 16"><path d="M1 0.5 H10.5 L14 4 V15.5 H1 Z" fill="#5fae3a" stroke="#3e8a22" stroke-width="0.8"/><path d="M10.5 0.5 V4 H14" fill="#e8f4e0"/><rect x="2" y="1.5" width="5" height="3" fill="#7cc457"/><path d="M4 6 L10.5 11.5 M10 6.5 L4 11.5 M4 6 L7 6" stroke="#fff" stroke-width="1.4" fill="none"/></svg>
<div class="a" style="left:9px;top:616px;width:96px;height:39px;box-sizing:border-box;border:1px solid #a3a3a3;border-radius:4px;background:#e3e9f3;box-shadow:inset 0 0 0 1px #fff;"></div>
<svg class="a" style="left:14px;top:625px" width="20" height="20" viewBox="0 0 20 20"><g fill="none" stroke-linecap="round" stroke-linejoin="round"><path d="M4 9.5 L8.5 13.5 L16.5 5.5" stroke="#2e2e2e" stroke-width="5.6" transform="translate(0,2.3)"/><path d="M4 9.5 L8.5 13.5 L16.5 5.5" stroke="#8a8a8a" stroke-width="3.4" transform="translate(0,2.3)"/><path d="M4 9.5 L8.5 13.5 L16.5 5.5" stroke="#2e2e2e" stroke-width="5.6"/><path d="M4 9.5 L8.5 13.5 L16.5 5.5" stroke="#c4c4c4" stroke-width="3.4"/></g></svg>
<div class="t" style="top:630.00px;font-size:12px;line-height:12px;color:#a6a6a6;left:48.5px;"><span class="c" style="width:9px">U</span><span class="c" style="width:7px">p</span><span class="c" style="width:7px">d</span><span class="c" style="width:7px">a</span><span class="c" style="width:3px">t</span><span class="c" style="width:7px">e</span></div>
<div class="a" style="left:113px;top:616px;width:96px;height:39px;box-sizing:border-box;border:1px solid #a3a3a3;border-radius:4px;background:#e3e9f3;box-shadow:inset 0 0 0 1px #fff;"></div>
<svg class="a" style="left:119px;top:626px" width="17" height="17" viewBox="0 0 17 17"><path d="M5.2 1 H11.8 L16 5.2 V11.8 L11.8 16 H5.2 L1 11.8 V5.2 Z" fill="#8a8a8a" stroke="#5e5e5e" stroke-width="1"/><path d="M5.6 2.6 H11.4 L14.4 5.6 V11.4 L11.4 14.4 H5.6 L2.6 11.4 V5.6 Z" fill="#9a9a9a" stroke="#c0c0c0" stroke-width="1"/><path d="M5.5 5.5 L11.5 11.5 M11.5 5.5 L5.5 11.5" stroke="#fff" stroke-width="2.6"/></svg>
<div class="t" style="top:630.00px;font-size:12px;line-height:12px;color:#a6a6a6;left:143.5px;"><span class="c" style="width:9px">C</span><span class="c" style="width:3px">l</span><span class="c" style="width:7px">o</span><span class="c" style="width:6px">s</span><span class="c" style="width:7px">e</span><span class="c" style="width:3px">&nbsp;</span><span class="c" style="width:4px">(</span><span class="c" style="width:7px">F</span><span class="c" style="width:7px">4</span><span class="c" style="width:4px">)</span></div>
<div class="a" style="left:217px;top:616px;width:136px;height:38px;box-sizing:border-box;border:1px solid #a3a3a3;border-radius:4px;background:#e3e9f3;box-shadow:inset 0 0 0 1px #fff;"></div>
<svg class="a" style="left:222px;top:624px" width="20" height="20" viewBox="0 0 20 20"><path d="M4 5 H13.3 Q17.2 5 17.2 9.6 Q17.2 14 13.3 14 H6.5" fill="none" stroke="#3c8a0e" stroke-width="4.6" stroke-linecap="square"/><path d="M4 5 H13.3 Q17.2 5 17.2 9.6 Q17.2 14 13.3 14 H6.5" fill="none" stroke="#a6dc1e" stroke-width="2.6" stroke-linecap="square"/><path d="M6.8 9.6 L2 14 L6.8 18.4 Z" fill="#a6dc1e" stroke="#3c8a0e" stroke-width="1" stroke-linejoin="round"/></svg>
<div class="t" style="top:622.00px;font-size:12px;line-height:12px;color:#000;left:96px;width:400px;text-align:center;"><span class="c" style="width:9px">R</span><span class="c" style="width:7px">e</span><span class="c" style="width:6px">v</span><span class="c" style="width:7px">e</span><span class="c" style="width:4px">r</span><span class="c" style="width:6px">s</span><span class="c" style="width:7px">e</span><span class="c" style="width:3px">&nbsp;</span><span class="c" style="width:3px">I</span><span class="c" style="width:7px">n</span><span class="c" style="width:6px">v</span><span class="c" style="width:7px">o</span><span class="c" style="width:3px">i</span><span class="c" style="width:6px">c</span><span class="c" style="width:7px">e</span></div>
<div class="t" style="top:637.00px;font-size:12px;line-height:12px;color:#000;left:96px;width:400px;text-align:center;"><span class="c" style="width:8px">P</span><span class="c" style="width:7px">a</span><span class="c" style="width:6px">y</span><span class="c" style="width:10px">m</span><span class="c" style="width:7px">e</span><span class="c" style="width:7px">n</span><span class="c" style="width:3px">t</span></div>
<div class="a" style="left:491px;top:83px;width:36px;height:33px;background:#fff;clip-path:polygon(3px 0,calc(100% - 3px) 0,100% 3px,100% calc(100% - 3px),calc(100% - 3px) 100%,3px 100%,0 calc(100% - 3px),0 3px);"></div>
<div class="a" style="left:492px;top:84px;width:34px;height:31px;background:#0000ff;clip-path:polygon(2px 0,calc(100% - 2px) 0,100% 2px,100% calc(100% - 2px),calc(100% - 2px) 100%,2px 100%,0 calc(100% - 2px),0 2px);"></div>
<div class="a" style="left:496px;top:88px;width:26px;height:23px;background:#fff;clip-path:polygon(2px 0,calc(100% - 2px) 0,100% 2px,100% calc(100% - 2px),calc(100% - 2px) 100%,2px 100%,0 calc(100% - 2px),0 2px);"></div>
<svg class="a" style="left:504px;top:91px" width="7" height="17" viewBox="0 0 7 17"><path d="M4 0 H7 V17 H4 V4.5 H0 V2 H2 L3.2 0 Z" fill="#0000ff"/></svg>
<div class="a" style="left:332px;top:122px;width:36px;height:33px;background:#fff;clip-path:polygon(3px 0,calc(100% - 3px) 0,100% 3px,100% calc(100% - 3px),calc(100% - 3px) 100%,3px 100%,0 calc(100% - 3px),0 3px);"></div>
<div class="a" style="left:333px;top:123px;width:34px;height:31px;background:#0000ff;clip-path:polygon(2px 0,calc(100% - 2px) 0,100% 2px,100% calc(100% - 2px),calc(100% - 2px) 100%,2px 100%,0 calc(100% - 2px),0 2px);"></div>
<div class="a" style="left:337px;top:127px;width:26px;height:23px;background:#fff;clip-path:polygon(2px 0,calc(100% - 2px) 0,100% 2px,100% calc(100% - 2px),calc(100% - 2px) 100%,2px 100%,0 calc(100% - 2px),0 2px);"></div>
<div class="t" style="top:126.50px;font-size:24px;line-height:24px;color:#0000ff;font-weight:bold;left:150.0px;width:400px;text-align:center;">2</div>
<div class="a" style="left:300px;top:206px;width:36px;height:33px;background:#fff;clip-path:polygon(3px 0,calc(100% - 3px) 0,100% 3px,100% calc(100% - 3px),calc(100% - 3px) 100%,3px 100%,0 calc(100% - 3px),0 3px);"></div>
<div class="a" style="left:301px;top:207px;width:34px;height:31px;background:#0000ff;clip-path:polygon(2px 0,calc(100% - 2px) 0,100% 2px,100% calc(100% - 2px),calc(100% - 2px) 100%,2px 100%,0 calc(100% - 2px),0 2px);"></div>
<div class="a" style="left:305px;top:211px;width:26px;height:23px;background:#fff;clip-path:polygon(2px 0,calc(100% - 2px) 0,100% 2px,100% calc(100% - 2px),calc(100% - 2px) 100%,2px 100%,0 calc(100% - 2px),0 2px);"></div>
<div class="t" style="top:210.50px;font-size:24px;line-height:24px;color:#0000ff;font-weight:bold;left:118.0px;width:400px;text-align:center;">3</div>
<div class="a" style="left:529px;top:190px;width:36px;height:33px;background:#fff;clip-path:polygon(3px 0,calc(100% - 3px) 0,100% 3px,100% calc(100% - 3px),calc(100% - 3px) 100%,3px 100%,0 calc(100% - 3px),0 3px);"></div>
<div class="a" style="left:530px;top:191px;width:34px;height:31px;background:#0000ff;clip-path:polygon(2px 0,calc(100% - 2px) 0,100% 2px,100% calc(100% - 2px),calc(100% - 2px) 100%,2px 100%,0 calc(100% - 2px),0 2px);"></div>
<div class="a" style="left:534px;top:195px;width:26px;height:23px;background:#fff;clip-path:polygon(2px 0,calc(100% - 2px) 0,100% 2px,100% calc(100% - 2px),calc(100% - 2px) 100%,2px 100%,0 calc(100% - 2px),0 2px);"></div>
<div class="t" style="top:194.50px;font-size:24px;line-height:24px;color:#0000ff;font-weight:bold;left:347.0px;width:400px;text-align:center;">4</div>
<div class="a" style="left:744px;top:194px;width:36px;height:33px;background:#fff;clip-path:polygon(3px 0,calc(100% - 3px) 0,100% 3px,100% calc(100% - 3px),calc(100% - 3px) 100%,3px 100%,0 calc(100% - 3px),0 3px);"></div>
<div class="a" style="left:745px;top:195px;width:34px;height:31px;background:#0000ff;clip-path:polygon(2px 0,calc(100% - 2px) 0,100% 2px,100% calc(100% - 2px),calc(100% - 2px) 100%,2px 100%,0 calc(100% - 2px),0 2px);"></div>
<div class="a" style="left:749px;top:199px;width:26px;height:23px;background:#fff;clip-path:polygon(2px 0,calc(100% - 2px) 0,100% 2px,100% calc(100% - 2px),calc(100% - 2px) 100%,2px 100%,0 calc(100% - 2px),0 2px);"></div>
<div class="t" style="top:198.50px;font-size:24px;line-height:24px;color:#0000ff;font-weight:bold;left:562.0px;width:400px;text-align:center;">5</div>
<div class="a" style="left:124px;top:231px;width:36px;height:33px;background:#fff;clip-path:polygon(3px 0,calc(100% - 3px) 0,100% 3px,100% calc(100% - 3px),calc(100% - 3px) 100%,3px 100%,0 calc(100% - 3px),0 3px);"></div>
<div class="a" style="left:125px;top:232px;width:34px;height:31px;background:#0000ff;clip-path:polygon(2px 0,calc(100% - 2px) 0,100% 2px,100% calc(100% - 2px),calc(100% - 2px) 100%,2px 100%,0 calc(100% - 2px),0 2px);"></div>
<div class="a" style="left:129px;top:236px;width:26px;height:23px;background:#fff;clip-path:polygon(2px 0,calc(100% - 2px) 0,100% 2px,100% calc(100% - 2px),calc(100% - 2px) 100%,2px 100%,0 calc(100% - 2px),0 2px);"></div>
<div class="t" style="top:235.50px;font-size:24px;line-height:24px;color:#0000ff;font-weight:bold;left:-58.0px;width:400px;text-align:center;">6</div>
<div class="a" style="left:338px;top:256px;width:36px;height:33px;background:#fff;clip-path:polygon(3px 0,calc(100% - 3px) 0,100% 3px,100% calc(100% - 3px),calc(100% - 3px) 100%,3px 100%,0 calc(100% - 3px),0 3px);"></div>
<div class="a" style="left:339px;top:257px;width:34px;height:31px;background:#0000ff;clip-path:polygon(2px 0,calc(100% - 2px) 0,100% 2px,100% calc(100% - 2px),calc(100% - 2px) 100%,2px 100%,0 calc(100% - 2px),0 2px);"></div>
<div class="a" style="left:343px;top:261px;width:26px;height:23px;background:#fff;clip-path:polygon(2px 0,calc(100% - 2px) 0,100% 2px,100% calc(100% - 2px),calc(100% - 2px) 100%,2px 100%,0 calc(100% - 2px),0 2px);"></div>
<div class="t" style="top:260.50px;font-size:24px;line-height:24px;color:#0000ff;font-weight:bold;left:156.0px;width:400px;text-align:center;">7</div>
<div class="a" style="left:240px;top:459px;width:36px;height:33px;background:#fff;clip-path:polygon(3px 0,calc(100% - 3px) 0,100% 3px,100% calc(100% - 3px),calc(100% - 3px) 100%,3px 100%,0 calc(100% - 3px),0 3px);"></div>
<div class="a" style="left:241px;top:460px;width:34px;height:31px;background:#0000ff;clip-path:polygon(2px 0,calc(100% - 2px) 0,100% 2px,100% calc(100% - 2px),calc(100% - 2px) 100%,2px 100%,0 calc(100% - 2px),0 2px);"></div>
<div class="a" style="left:245px;top:464px;width:26px;height:23px;background:#fff;clip-path:polygon(2px 0,calc(100% - 2px) 0,100% 2px,100% calc(100% - 2px),calc(100% - 2px) 100%,2px 100%,0 calc(100% - 2px),0 2px);"></div>
<div class="t" style="top:463.50px;font-size:24px;line-height:24px;color:#0000ff;font-weight:bold;left:58.0px;width:400px;text-align:center;">8</div>
<div class="a" style="left:137px;top:579px;width:36px;height:33px;background:#fff;clip-path:polygon(3px 0,calc(100% - 3px) 0,100% 3px,100% calc(100% - 3px),calc(100% - 3px) 100%,3px 100%,0 calc(100% - 3px),0 3px);"></div>
<div class="a" style="left:138px;top:580px;width:34px;height:31px;background:#0000ff;clip-path:polygon(2px 0,calc(100% - 2px) 0,100% 2px,100% calc(100% - 2px),calc(100% - 2px) 100%,2px 100%,0 calc(100% - 2px),0 2px);"></div>
<div class="a" style="left:142px;top:584px;width:26px;height:23px;background:#fff;clip-path:polygon(2px 0,calc(100% - 2px) 0,100% 2px,100% calc(100% - 2px),calc(100% - 2px) 100%,2px 100%,0 calc(100% - 2px),0 2px);"></div>
<div class="t" style="top:583.50px;font-size:24px;line-height:24px;color:#0000ff;font-weight:bold;left:-45.0px;width:400px;text-align:center;">9</div>
<div class="a" style="left:495px;top:579px;width:39px;height:33px;background:#fff;clip-path:polygon(3px 0,calc(100% - 3px) 0,100% 3px,100% calc(100% - 3px),calc(100% - 3px) 100%,3px 100%,0 calc(100% - 3px),0 3px);"></div>
<div class="a" style="left:496px;top:580px;width:37px;height:31px;background:#0000ff;clip-path:polygon(2px 0,calc(100% - 2px) 0,100% 2px,100% calc(100% - 2px),calc(100% - 2px) 100%,2px 100%,0 calc(100% - 2px),0 2px);"></div>
<div class="a" style="left:500px;top:584px;width:29px;height:23px;background:#fff;clip-path:polygon(2px 0,calc(100% - 2px) 0,100% 2px,100% calc(100% - 2px),calc(100% - 2px) 100%,2px 100%,0 calc(100% - 2px),0 2px);"></div>
<svg class="a" style="left:502px;top:587px" width="7" height="17" viewBox="0 0 7 17"><path d="M4 0 H7 V17 H4 V4.5 H0 V2 H2 L3.2 0 Z" fill="#0000ff"/></svg>
<div class="t" style="top:583.50px;font-size:24px;line-height:24px;color:#0000ff;font-weight:bold;left:515px;">0</div>
<div class="a" style="left:738px;top:432px;width:39px;height:33px;background:#fff;clip-path:polygon(3px 0,calc(100% - 3px) 0,100% 3px,100% calc(100% - 3px),calc(100% - 3px) 100%,3px 100%,0 calc(100% - 3px),0 3px);"></div>
<div class="a" style="left:739px;top:433px;width:37px;height:31px;background:#0000ff;clip-path:polygon(2px 0,calc(100% - 2px) 0,100% 2px,100% calc(100% - 2px),calc(100% - 2px) 100%,2px 100%,0 calc(100% - 2px),0 2px);"></div>
<div class="a" style="left:743px;top:437px;width:29px;height:23px;background:#fff;clip-path:polygon(2px 0,calc(100% - 2px) 0,100% 2px,100% calc(100% - 2px),calc(100% - 2px) 100%,2px 100%,0 calc(100% - 2px),0 2px);"></div>
<svg class="a" style="left:745px;top:440px" width="7" height="17" viewBox="0 0 7 17"><path d="M4 0 H7 V17 H4 V4.5 H0 V2 H2 L3.2 0 Z" fill="#0000ff"/></svg>
<svg class="a" style="left:759px;top:440px" width="7" height="17" viewBox="0 0 7 17"><path d="M4 0 H7 V17 H4 V4.5 H0 V2 H2 L3.2 0 Z" fill="#0000ff"/></svg>
<div class="a" style="left:353px;top:619px;width:39px;height:33px;background:#fff;clip-path:polygon(3px 0,calc(100% - 3px) 0,100% 3px,100% calc(100% - 3px),calc(100% - 3px) 100%,3px 100%,0 calc(100% - 3px),0 3px);"></div>
<div class="a" style="left:354px;top:620px;width:37px;height:31px;background:#0000ff;clip-path:polygon(2px 0,calc(100% - 2px) 0,100% 2px,100% calc(100% - 2px),calc(100% - 2px) 100%,2px 100%,0 calc(100% - 2px),0 2px);"></div>
<div class="a" style="left:358px;top:624px;width:29px;height:23px;background:#fff;clip-path:polygon(2px 0,calc(100% - 2px) 0,100% 2px,100% calc(100% - 2px),calc(100% - 2px) 100%,2px 100%,0 calc(100% - 2px),0 2px);"></div>
<svg class="a" style="left:360px;top:627px" width="7" height="17" viewBox="0 0 7 17"><path d="M4 0 H7 V17 H4 V4.5 H0 V2 H2 L3.2 0 Z" fill="#0000ff"/></svg>
<div class="t" style="top:623.50px;font-size:24px;line-height:24px;color:#0000ff;font-weight:bold;left:373px;">2</div>
<div class="a" style="left:476px;top:579px;width:74px;height:1px;background:#a3a3a3;"></div>
</body></html>
